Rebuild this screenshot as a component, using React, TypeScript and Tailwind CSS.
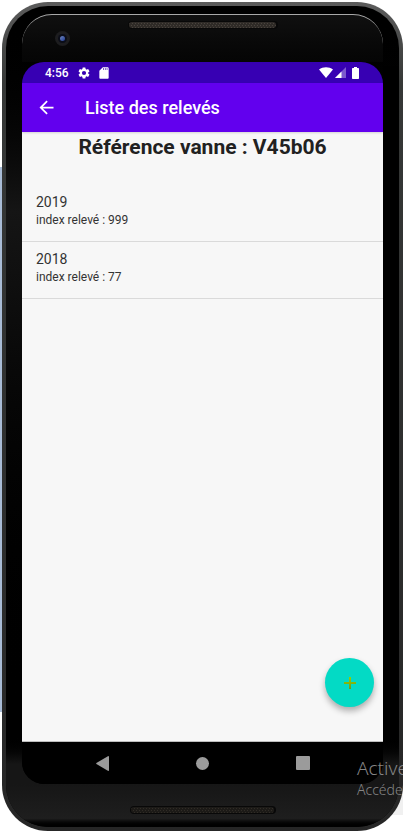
import React from "react";

type Reading = { year: string; index: number };

const readings: Reading[] = [
  { year: "2019", index: 999 },
  { year: "2018", index: 77 },
];

function Speaker({ id, strong }: { id: string; strong?: boolean }) {
  return (
    <svg className="h-2 w-full" aria-hidden="true">
      <defs>
        <pattern id={id} width="3" height="4" patternUnits="userSpaceOnUse">
          <rect width="3" height="4" fill={strong ? "#2f2b27" : "#1c1a17"} />
          <rect width="1" height="1" x="0" y="0" fill={strong ? "#4a443e" : "#302c26"} />
          <rect width="1" height="1" x="1" y="2" fill={strong ? "#4a443e" : "#302c26"} />
        </pattern>
      </defs>
      <rect x="0" y="0" width="100%" height="8" rx="4" fill="#080808" />
      <rect x="1" y="1" width="98%" height="6" rx="3" fill={`url(#${id})`} />
    </svg>
  );
}

function StatusBar() {
  return (
    <div className="flex h-[21px] items-center bg-[#3700b3] pl-[23px] pr-6 text-white">
      <span className="text-[12px] font-medium leading-4">4:56</span>
      <svg className="ml-2 size-[14px]" viewBox="0 0 24 24" fill="currentColor" aria-hidden="true">
        <path d="M19.14 12.94c.04-.3.06-.61.06-.94 0-.32-.02-.64-.07-.94l2.03-1.58a.49.49 0 0 0 .12-.61l-1.92-3.32a.49.49 0 0 0-.59-.22l-2.39.96c-.5-.38-1.03-.7-1.62-.94L14.4 2.81a.48.48 0 0 0-.48-.41h-3.84a.47.47 0 0 0-.47.41l-.36 2.54c-.59.24-1.13.57-1.62.94l-2.39-.96a.48.48 0 0 0-.59.22L2.74 8.87a.48.48 0 0 0 .12.61l2.03 1.58c-.05.3-.09.63-.09.94s.02.64.07.94l-2.03 1.58a.49.49 0 0 0-.12.61l1.92 3.32c.12.22.37.29.59.22l2.39-.96c.5.38 1.03.7 1.62.94l.36 2.54c.05.24.24.41.48.41h3.84c.24 0 .44-.17.47-.41l.36-2.54c.59-.24 1.13-.56 1.62-.94l2.39.96c.22.08.47 0 .59-.22l1.92-3.32a.47.47 0 0 0-.12-.61l-2.01-1.58zM12 15.6a3.6 3.6 0 1 1 0-7.2 3.6 3.6 0 0 1 0 7.2z" />
      </svg>
      <svg className="ml-[6px] size-[14px]" viewBox="0 0 24 24" fill="currentColor" aria-hidden="true">
        <path d="M18 2h-8L4.02 8 4 20c0 1.1.9 2 2 2h12c1.1 0 2-.9 2-2V4c0-1.100-.9-2-2-2zm-6 4.500h-1.500V4H12v2.500zm3 0h-1.500V4H15v2.500zm3 0h-1.500V4H18v2.500z" />
      </svg>
      <svg className="ml-auto h-[11px] w-[14px]" viewBox="0 0 14 11" fill="currentColor" aria-hidden="true">
        <path d="M0 2.500C4-.6 10-.6 14 2.500L7 11z" />
      </svg>
      <svg className="ml-[2px] size-[11px]" viewBox="0 0 11 11" fill="currentColor" aria-hidden="true">
        <path d="M0 11L11 0v11z" opacity="0.35" />
        <path d="M0 11L6.500 4.500V11z" />
      </svg>
      <svg className="ml-[6px] h-3 w-[7px]" viewBox="0 0 7 12" fill="currentColor" aria-hidden="true">
        <path d="M2 0h3v1h1.300q.7 0 .7.700v9.600q0 .7-.7.700H.7q-.7 0-.7-.7V1.700Q0 1 .7 1H2z" />
      </svg>
    </div>
  );
}

function AppBar() {
  return (
    <header className="relative z-10 flex h-[49px] items-center bg-[#6200ee] pl-[14px] text-white shadow-[0_1px_2px_rgba(0,0,0,0.15)]">
      <button type="button" aria-label="Retour" className="flex size-[21px] items-center justify-center">
        <svg className="size-[21px]" viewBox="0 0 24 24" fill="currentColor" aria-hidden="true">
          <path d="M20 11H7.830l5.590-5.590L12 4l-8 8 8 8 1.410-1.410L7.830 13H20v-2z" />
        </svg>
      </button>
      <h1 className="ml-7 text-[18px] font-medium leading-6">Liste des relevés</h1>
    </header>
  );
}

function NavBar() {
  return (
    <nav className="grid h-[43px] grid-cols-3 items-center border-t border-[#bdbdbd] bg-black px-[30px] text-[#9b9b9b]">
      <button type="button" aria-label="Précédent" className="flex justify-center">
        <svg className="h-[15px] w-[13px]" viewBox="0 0 13 15" fill="currentColor" aria-hidden="true">
          <path d="M12.300 0Q13 0 13 .7v13.600q0 .7-.7.700L.4 8Q0 7.500.4 7z" />
        </svg>
      </button>
      <button type="button" aria-label="Accueil" className="flex justify-center">
        <span className="size-[13px] rounded-full bg-[#9b9b9b]" />
      </button>
      <button type="button" aria-label="Aperçu" className="flex justify-center">
        <span className="size-[14px] rounded-[1px] bg-[#9b9b9b]" />
      </button>
    </nav>
  );
}

export default function App() {
  return (
    <div
      className="relative flex min-h-screen flex-col overflow-hidden bg-white pb-px pl-[2px] pt-[2px]"
      style={{ fontFamily: 'Roboto, "Noto Sans", sans-serif' }}
    >
      <div className="absolute left-0 top-[167px] h-[545px] w-[2px] bg-[#a9bcd6]" />
      <div className="absolute bottom-[17px] right-0 h-[100px] w-5 bg-[#f0f0f0]" />

      <div className="relative flex flex-1 flex-col rounded-[46px] bg-linear-to-b from-[#5c5c5c] via-[#363837] via-10% to-[#262626] p-[4px]">
        <div className="relative flex flex-1 flex-col rounded-[42px] bg-linear-to-b from-black via-[#151515] via-25% to-black to-88% px-4">
          <div className="absolute bottom-[84px] right-0 top-[60px] w-4 bg-black" />
          <div className="absolute inset-x-4 top-[8px] h-[48px] rounded-t-[30px] border-t border-[#a8a8a8] bg-linear-to-b from-[#101010] to-[#050505]" />
          <div className="relative h-14">
            <div className="absolute left-[33px] top-[25px] flex size-[15px] items-center justify-center rounded-full bg-[#1d1d1f]">
              <div className="flex size-[9px] items-center justify-center rounded-full bg-[#0b0d18]">
                <div className="size-[5px] rounded-full bg-linear-to-br from-[#6f86c0] to-[#243c90]" />
              </div>
            </div>
            <div className="flex justify-center pt-[15px]">
              <div className="w-[150px]">
                <Speaker id="earpiece" strong />
              </div>
            </div>
          </div>

          <div className="relative flex flex-1 flex-col">
            <div className="absolute -inset-x-4 bottom-0 h-[50px] bg-linear-to-b from-black to-[#161616] to-60%" />
            <div className="relative flex flex-1 flex-col overflow-hidden rounded-[22px] bg-black">
              <StatusBar />
              <AppBar />
              <main className="relative flex flex-1 flex-col bg-[#f7f7f7] text-[#212121]">
                <h2 className="text-center text-[21px] font-bold leading-[30px]">Référence vanne : V45b06</h2>
                <ul className="mt-[23px]">
                  {readings.map((r) => (
                    <li key={r.year} className="h-[57px] border-b border-[#dadada] px-[14px] pt-2 text-[#333]">
                      <p className="text-[14px] leading-[18px]">{r.year}</p>
                      <p className="text-[12px] leading-[18px]">index relevé : {r.index}</p>
                    </li>
                  ))}
                </ul>
                <button
                  type="button"
                  aria-label="Ajouter un relevé"
                  className="absolute bottom-[34px] right-[9px] flex size-[49px] items-center justify-center rounded-full bg-[#03dac5] shadow-[0_4px_6px_rgba(0,0,0,0.3)]"
                >
                  <svg className="size-3" viewBox="0 0 12 12" aria-hidden="true">
                    <defs>
                      <linearGradient id="plus" x1="0" y1="0" x2="0" y2="1">
                        <stop offset="0" stopColor="#98d000" />
                        <stop offset="1" stopColor="#6d9a1a" />
                      </linearGradient>
                    </defs>
                    <path d="M5 0h2v5h5v2H7v5H5V7H0V5h5z" fill="url(#plus)" />
                  </svg>
                </button>
              </main>
              <NavBar />
            </div>
          </div>

          <div className="-mx-4 flex h-[43px] justify-center rounded-b-[42px] bg-linear-to-b from-[#161616] via-[#1e1e1e] via-80% to-black pt-[22px]">
            <div className="w-[146px]">
              <Speaker id="loudspeaker" />
            </div>
          </div>
        </div>
      </div>

      <div
        className="absolute bottom-8 left-[357px] whitespace-nowrap text-[#858585]"
        style={{ fontFamily: '"Noto Sans", "Open Sans", sans-serif' }}
      >
        <p className="text-[19px] font-light leading-6">Active</p>
        <p className="text-[14px] font-light leading-5">Accéde</p>
      </div>
    </div>
  );
}
